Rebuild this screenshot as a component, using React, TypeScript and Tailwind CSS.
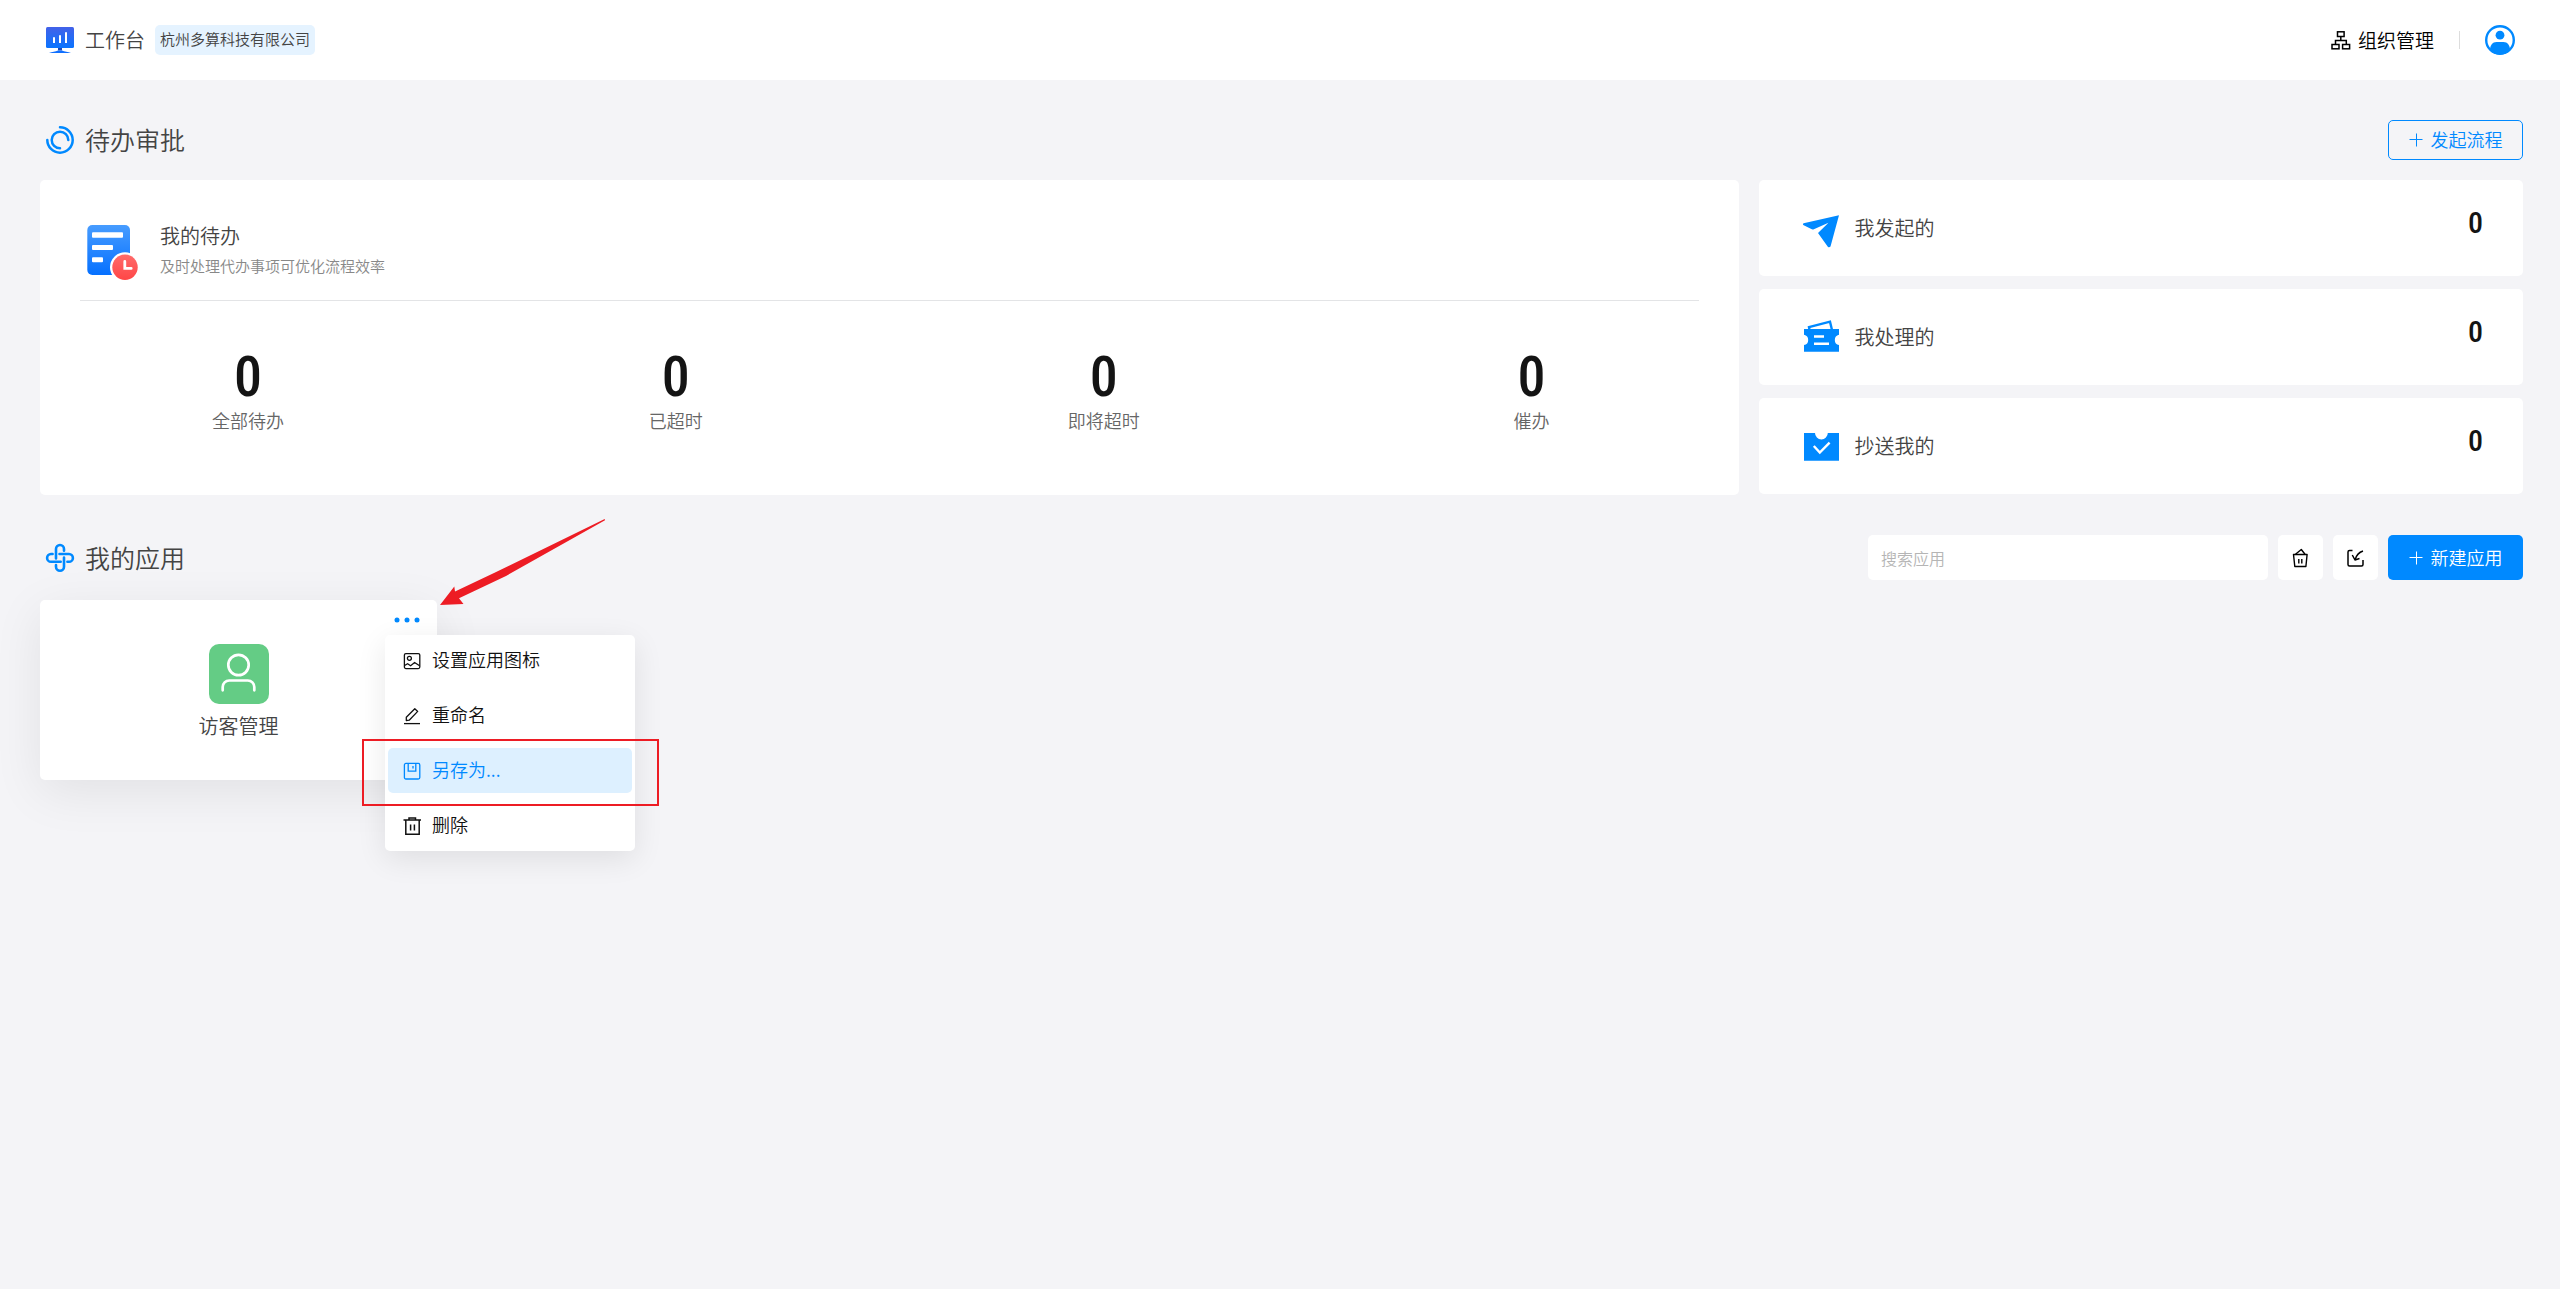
import React, { useState } from 'react';

const stats = [
  { label: '全部待办', value: 0 },
  { label: '已超时', value: 0 },
  { label: '即将超时', value: 0 },
  { label: '催办', value: 0 },
];

const LogoIcon = () => (
  <svg className="size-[30px]" viewBox="0 0 30 30" fill="none">
    <defs>
      <linearGradient id="logo" x1="0" y1="0" x2="0" y2="1">
        <stop offset="0" stopColor="#4361e8" />
        <stop offset="1" stopColor="#0a74ff" />
      </linearGradient>
    </defs>
    <rect x="1" y="2" width="28" height="21" rx="1.5" fill="url(#logo)" />
    <path d="M9 12.3v5.7M15 10.2v7.8M21 7.2v10.8" stroke="#fff" strokeWidth="2" />
    <path d="M13 23h4v2.5H13z" fill="#1c49b8" />
    <path d="M4 28c3-1.8 6.5-1 9-2.6h4c2.5 1.6 6 .8 9 2.6z" fill="#0f6fff" />
  </svg>
);

const SwirlIcon = () => (
  <svg className="size-[30px]" viewBox="0 0 30 30" fill="none" stroke="#0089ff" strokeWidth="2.5" strokeLinecap="round">
    <path d="M15 2.3A12.7 12.7 0 1 1 2.3 15" />
    <path d="M23.3 15A8.3 8.3 0 1 0 15 23.3" />
  </svg>
);

const CloverIcon = () => (
  <svg className="size-[30px]" viewBox="0 0 30 30" fill="none" stroke="#0089ff" strokeWidth="2.6" strokeLinecap="round">
    <path d="M11 15.5V6a4 4 0 0 1 8 0v1.8" />
    <path d="M14.5 11H24a3.9 3.9 0 0 1 0 7.8h-1.6" />
    <path d="M19 14.5v9.3a4 4 0 0 1-8 0V22" />
    <path d="M15.7 18.8H6A3.9 3.9 0 0 1 6 11h1.6" />
  </svg>
);

const OrgIcon = () => (
  <svg className="size-5" viewBox="0 0 20 20" fill="none" stroke="currentColor" strokeWidth="1.5">
    <rect x="6.5" y="1.8" width="6.6" height="4.7" />
    <path d="M9.8 6.5v4M4.5 14.5v-4h10.8v4" />
    <rect x="1" y="14.5" width="7" height="4.3" />
    <rect x="11.6" y="14.5" width="7" height="4.3" />
  </svg>
);

const AvatarIcon = () => (
  <svg className="size-[30px]" viewBox="0 0 30 30">
    <circle cx="15" cy="15" r="13.8" fill="#fff" stroke="#0089ff" strokeWidth="2.4" />
    <circle cx="15" cy="10.2" r="4.4" fill="#0089ff" />
    <path d="M5 25.5c0-5.5 2.5-8.5 6.5-8.5h7c4 0 6.5 3 6.5 8.5a14 14 0 0 1-20 0z" fill="#0089ff" />
  </svg>
);

const PlusIcon = () => (
  <svg className="size-3.5" viewBox="0 0 14 14" stroke="currentColor" strokeWidth="1">
    <path d="M7.5 0.5v13M0.5 6.5h13" />
  </svg>
);

const TodoIcon = () => (
  <svg className="h-15 w-[54px]" viewBox="0 -4 54 60" fill="none">
    <defs>
      <linearGradient id="todo" x1="0" y1="0" x2="0" y2="1">
        <stop offset="0" stopColor="#479cff" />
        <stop offset="1" stopColor="#0570ff" />
      </linearGradient>
      <linearGradient id="clock" x1="0" y1="0" x2="0" y2="1">
        <stop offset="0" stopColor="#ff6b6b" />
        <stop offset="1" stopColor="#ff4646" />
      </linearGradient>
    </defs>
    <rect x="1.3" y="1" width="42.7" height="50" rx="5" fill="url(#todo)" />
    <rect x="6" y="8.3" width="31" height="5.4" rx="1" fill="#fff" />
    <rect x="6" y="21" width="21" height="5" rx="1" fill="#fff" />
    <rect x="6" y="33.3" width="11" height="5" rx="1" fill="#fff" />
    <circle cx="39" cy="43.3" r="15" fill="#fff" />
    <circle cx="39" cy="43.3" r="12.7" fill="url(#clock)" />
    <path d="M38.8 37.5v6.9h6.4" stroke="#fff" strokeWidth="2.8" strokeLinecap="round" />
  </svg>
);

const SendIcon = () => (
  <svg className="size-10" viewBox="0 0 40 40" fill="#0089ff">
    <path d="M4.6 15.3 40 7.2 31.5 38.5q-1 1.3-2.5.5L19 25 29.5 14.7 14.3 21.4q-1 .3-2-.3L4.2 17q-.8-1.2.4-1.7z" />
  </svg>
);

const TicketIcon = () => (
  <svg className="size-10" viewBox="0 0 40 40" fill="none">
    <path d="M10.5 13 10 10.2 31 4.7l2 8.3" stroke="#0089ff" strokeWidth="2.4" />
    <path d="M5 12h35v5.8a5.2 5.2 0 0 0 0 10.2v6.7H5V28a5.2 5.2 0 0 0 0-10.2z" fill="#0089ff" />
    <path d="M15 19.5h10M15 26.7h15" stroke="#fff" strokeWidth="2.4" />
  </svg>
);

const InboxIcon = () => (
  <svg className="size-10" viewBox="0 0 40 40" fill="none">
    <path d="M5 7h11a6.4 6.4 0 0 0 12.8 0H40v27.7H5z" fill="#0089ff" />
    <path d="m14.8 20 6 6.5 9.8-9.8" stroke="#fff" strokeWidth="2.4" />
  </svg>
);

const BinIcon = () => (
  <svg className="size-5" viewBox="0 0 20 20" fill="none" stroke="currentColor" strokeWidth="1.4" strokeLinejoin="round">
    <path d="M2.5 6.5h13.6l-1.2 12H3.8z" />
    <path d="M4.5 6.3 10.3 1.5l3.7 4.8M7.8 11v4.5M10.8 11v4.5" />
  </svg>
);

const ImportIcon = () => (
  <svg className="size-5" viewBox="0 0 20 20" fill="none" stroke="currentColor" strokeWidth="1.5" strokeLinejoin="round">
    <path d="M6.5 2.5h-3Q2 2.5 2 4v12.5Q2 18 3.5 18h12q1.5 0 1.5-1.5V12" />
    <path d="M17 3q-6 2-7.8 8.5M6.3 7 9 12l4.5-1.5" />
  </svg>
);

const UserIcon = () => (
  <svg className="size-15 rounded-[10px] bg-[#64cc85]" viewBox="0 0 60 60" fill="none" stroke="#fff" strokeWidth="2.7" strokeLinecap="round">
    <circle cx="29.5" cy="21" r="10.2" />
    <path d="M13.7 46.3V43a6.5 6.5 0 0 1 6.5-6.5h18.6a6.5 6.5 0 0 1 6.5 6.5v3.3" />
  </svg>
);

const iconProps = {
  className: 'size-[18px]',
  viewBox: '0 0 18 18',
  fill: 'none',
  stroke: 'currentColor',
  strokeWidth: 1.3,
};

const menuItems = [
  {
    label: '设置应用图标',
    icon: (
      <svg {...iconProps}>
        <rect x="1.4" y="1.6" width="15.4" height="15" rx="1.5" />
        <circle cx="6.4" cy="6.3" r="2" />
        <path d="m1.6 13.5 3-1.8 3 2 4-3.2 5 3.2" />
      </svg>
    ),
  },
  {
    label: '重命名',
    icon: (
      <svg {...iconProps}>
        <path d="M3.3 13.5v-3.2L11.8 1.8l2.9 2.6-8.5 8.8z" strokeLinejoin="round" />
        <path d="M1 16.6h16" />
      </svg>
    ),
  },
  {
    label: '另存为...',
    icon: (
      <svg {...iconProps}>
        <rect x="1.4" y="1.4" width="15.4" height="15.6" rx="1.5" />
        <path d="M5.2 1.6v7.6h7.6V1.6M10 4v2.5" />
      </svg>
    ),
  },
  {
    label: '删除',
    icon: (
      <svg {...iconProps} strokeWidth={1.5}>
        <path d="M.5 3H18M6 3V1h6.5v2M2.8 3v14.3h13.4V3M7.6 7.5v6M11.4 7.5v6" />
      </svg>
    ),
  },
];

const records = [
  { label: '我发起的', value: 0, icon: <SendIcon /> },
  { label: '我处理的', value: 0, icon: <TicketIcon /> },
  { label: '抄送我的', value: 0, icon: <InboxIcon /> },
];

const SectionTitle = ({ icon, children }: { icon: React.ReactNode; children: React.ReactNode }) => (
  <h2 className="flex items-center gap-2.5 pl-[5px] text-[25px] leading-9 text-[#444]">
    {icon}
    <span className="pb-0.5">{children}</span>
  </h2>
);

const AppMenu = () => (
  <ul className="absolute top-[35px] left-[345px] flex w-[250px] flex-col gap-2.5 rounded-[5px] bg-white p-[3px] shadow-[0_8px_30px_rgba(0,0,0,0.09)]">
    {menuItems.map((item, i) => (
      <li key={item.label}>
        <button
          type="button"
          className={`flex h-[45px] w-full items-center gap-[11px] rounded-[5px] pl-[15px] text-lg ${
            i === 2 ? 'bg-[#ddf0ff] text-[#0089ff]' : 'text-[#111]'
          }`}
        >
          {item.icon}
          <span className="pb-1">{item.label}</span>
        </button>
      </li>
    ))}
  </ul>
);

export default function App() {
  const [keyword, setKeyword] = useState('');

  return (
    <div className="min-h-screen bg-[#f4f4f7] font-['Noto_Sans_CJK_SC',sans-serif] font-[350]">
      {/* Header */}
      <header className="flex h-20 items-center justify-between bg-white px-[45px]">
        <div className="flex items-center gap-2.5">
          <LogoIcon />
          <h1 className="text-xl text-[#444]">工作台</h1>
          <span className="rounded-[5px] bg-[#e5f3ff] px-[5px] pb-0.5 text-[15px] leading-7 text-[#444]">
            杭州多算科技有限公司
          </span>
        </div>
        <div className="flex items-center">
          <a href="#org" className="flex items-center gap-[7px] text-[19px] text-black">
            <OrgIcon />
            组织管理
          </a>
          <span className="mx-[25px] h-[18px] w-px bg-[#ddd]"></span>
          <button type="button" aria-label="账户">
            <AvatarIcon />
          </button>
        </div>
      </header>

      <main className="py-10 pr-[37px] pl-10">
        {/* Approvals */}
        <div className="flex items-center justify-between">
          <SectionTitle icon={<SwirlIcon />}>待办审批</SectionTitle>
          <button
            type="button"
            className="flex h-10 w-[135px] items-center justify-center gap-2 rounded-[5px] border border-[#0089ff] text-lg text-[#0089ff]"
          >
            <PlusIcon />
            <span className="pb-0.5">发起流程</span>
          </button>
        </div>

        <div className="mt-5 flex gap-5">
          <section className="h-[315px] flex-[69] rounded-[5px] bg-white">
            <div className="mx-10 flex h-[121px] items-center gap-5 border-b border-[#e3e4e6] pt-5 pl-1.5">
              <TodoIcon />
              <div>
                <h3 className="text-xl leading-8 text-[#444]">我的待办</h3>
                <p className="text-[15px] leading-7 text-[#888]">及时处理代办事项可优化流程效率</p>
              </div>
            </div>
            <div className="grid grid-cols-4 gap-x-3 pt-[46px] text-center">
              {stats.map((item) => (
                <div key={item.label}>
                  <div className="font-['Roboto_Condensed'] text-[56px] leading-[60px] font-medium text-[#141414]">{item.value}</div>
                  <div className="text-lg leading-[26px] text-[#666]">{item.label}</div>
                </div>
              ))}
            </div>
          </section>

          <section className="flex flex-[31] flex-col gap-[13px]">
            {records.map((item) => (
              <a key={item.label} href="#records" className="flex h-24 items-center rounded-[5px] bg-white px-10">
                {item.icon}
                <span className="ml-[15px] text-xl text-[#444]">{item.label}</span>
                <span className="ml-auto pb-2.5 font-['Roboto_Condensed'] text-3xl font-medium text-[#141414]">{item.value}</span>
              </a>
            ))}
          </section>
        </div>

        {/* Apps */}
        <div className="mt-10 flex h-[45px] items-center justify-between">
          <SectionTitle icon={<CloverIcon />}>我的应用</SectionTitle>
          <div className="flex gap-2.5">
            <input
              type="text"
              aria-label="搜索应用"
              placeholder="搜索应用"
              value={keyword}
              onChange={(e) => setKeyword(e.target.value)}
              className="h-[45px] w-[400px] rounded-[5px] bg-white px-[13px] text-base outline-none placeholder:text-[#b5b5b5]"
            />
            <button type="button" aria-label="回收站" className="flex size-[45px] items-center justify-center rounded-[5px] bg-white">
              <BinIcon />
            </button>
            <button type="button" aria-label="导入应用" className="flex size-[45px] items-center justify-center rounded-[5px] bg-white">
              <ImportIcon />
            </button>
            <button
              type="button"
              className="flex h-[45px] w-[135px] items-center justify-center gap-2 rounded-[5px] bg-[#0089ff] text-lg text-white"
            >
              <PlusIcon />
              <span className="pb-0.5">新建应用</span>
            </button>
          </div>
        </div>

        <div className="mt-5 grid grid-cols-6 gap-5">
          <div className="relative flex h-[180px] flex-col items-center justify-center gap-1 rounded-[5px] bg-white pt-2 shadow-[0_12px_50px_rgba(0,0,0,0.08)]">
            <UserIcon />
            <span className="text-xl leading-9 text-[#444]">访客管理</span>
            <button type="button" aria-label="更多" className="absolute top-4 right-4 text-[#0089ff]">
              <svg className="h-2 w-[27px]" viewBox="0 0 27 8" fill="currentColor">
                <circle cx="3" cy="4" r="2.5" />
                <circle cx="13" cy="4" r="2.5" />
                <circle cx="23" cy="4" r="2.5" />
              </svg>
            </button>

            <AppMenu />

            {/* Hints */}
            <div className="pointer-events-none absolute top-[139px] left-[322px] h-[67px] w-[297px] border-2 border-[#ed1c24]"></div>
            <svg className="pointer-events-none absolute -top-[81px] left-[400px] h-[87px] w-[166px]" viewBox="0 0 166 87" fill="#ed1c24">
              <path d="M0 86 14.3 67.5 15 72.5 54 54 164.7 0 165 1.2 66 57 19 79.2 23.5 85z" />
            </svg>
          </div>
        </div>
      </main>
    </div>
  );
}
